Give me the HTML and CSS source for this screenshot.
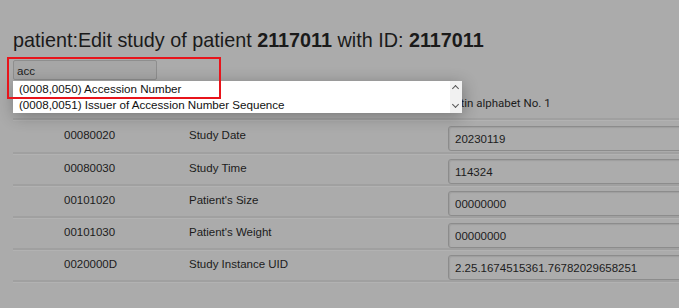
FILE: index.html
```html
<!DOCTYPE html>
<html>
<head>
<meta charset="utf-8">
<link rel="stylesheet" href="styles.css">
</head>
<body>
<div class="page">
  <h1 class="title">patient:Edit study of patient <b>2117011</b> with ID: <b>2117011</b></h1>
  <div class="search">
    <input class="search-input" type="text" value="acc">
    <div class="dropdown">
      <div class="options">
        <div class="option">(0008,0050) Accession Number</div>
        <div class="option">(0008,0051) Issuer of Accession Number Sequence</div>
      </div>
      <div class="scrollbar"><span class="arrow up"></span><span class="arrow down"></span></div>
    </div>
    <div class="highlight"></div>
  </div>
  <div class="table">
    <div class="row head-row">
      <div class="tag"></div>
      <div class="name"></div>
      <div class="value charset">Latin alphabet No. 1</div>
    </div>
    <div class="row first">
      <div class="tag">00080020</div>
      <div class="name">Study Date</div>
      <div class="value"><input class="field" type="text" value="20230119"></div>
    </div>
    <div class="row">
      <div class="tag">00080030</div>
      <div class="name">Study Time</div>
      <div class="value"><input class="field" type="text" value="114324"></div>
    </div>
    <div class="row">
      <div class="tag">00101020</div>
      <div class="name">Patient's Size</div>
      <div class="value"><input class="field" type="text" value="00000000"></div>
    </div>
    <div class="row">
      <div class="tag">00101030</div>
      <div class="name">Patient's Weight</div>
      <div class="value"><input class="field" type="text" value="00000000"></div>
    </div>
    <div class="row">
      <div class="tag">0020000D</div>
      <div class="name">Study Instance UID</div>
      <div class="value"><input class="field" type="text" value="2.25.1674515361.76782029658251"></div>
    </div>
  </div>
</div>
</body>
</html>
```
FILE: styles.css
```css
html, body {
  margin: 0;
  padding: 0;
}
body {
  width: 679px;
  height: 308px;
  overflow: hidden;
  background: #ababab;
  font-family: "Liberation Sans", Arial, sans-serif;
  color: #1c1c1c;
}
.page {
  padding-left: 13px;
}
.title {
  margin: 0;
  padding-top: 29px;
  font-size: 19.8px;
  font-weight: normal;
  line-height: 23px;
  color: #1a1a1a;
}
.title b {
  font-weight: bold;
}
.search {
  position: relative;
  margin-top: 8px;
  height: 20px;
}
.search-input {
  box-sizing: border-box;
  width: 144px;
  height: 20px;
  margin: 0;
  padding: 0 3px;
  border: 1px solid #8e8e8e;
  border-radius: 2px;
  background: #a6a6a6;
  font-family: "Liberation Sans", Arial, sans-serif;
  font-size: 11.6px;
  color: #1c1c1c;
  outline: none;
}
.dropdown {
  position: absolute;
  left: 0;
  top: 21px;
  width: 449px;
  height: 32px;
  background: #fff;
  display: flex;
  box-shadow: 1px 3px 16px rgba(0, 0, 0, 0.3);
  z-index: 5;
}
.options {
  flex: 1;
}
.option {
  height: 16px;
  line-height: 16px;
  padding-left: 6px;
  font-size: 11.6px;
  color: #111;
}
.scrollbar {
  width: 12px;
  background: #f1f1f1;
  position: relative;
}
.arrow {
  position: absolute;
  left: 3px;
  width: 4px;
  height: 4px;
  border-left: 1.2px solid #555;
  border-top: 1.2px solid #555;
}
.arrow.up {
  top: 5px;
  transform: rotate(45deg);
}
.arrow.down {
  bottom: 6px;
  transform: rotate(225deg);
}
.highlight {
  position: absolute;
  left: -6px;
  top: -3px;
  width: 210px;
  height: 38px;
  border: 2px solid #e8141b;
  z-index: 6;
}
.row {
  display: grid;
  grid-template-columns: 51px 125px 259px 1fr;
  height: 30px;
  border-bottom: 2px solid #a0a0a0;
  box-shadow: 0 1px 0 #b2b2b2;
  font-size: 11.5px;
}
.row::before {
  content: "";
}
.head-row {
  height: 38px;
}
.row.first {
  height: 32px;
}
.tag, .name {
  padding-top: 8px;
}
.value {
  padding-top: 5px;
}
.first .tag, .first .name {
  padding-top: 9px;
}
.first .value {
  padding-top: 6px;
}
.charset {
  padding-top: 16px;
  font-family: Roboto, "Liberation Sans", sans-serif;
  font-size: 11.5px;
  color: #1c1c1c;
}
.field {
  box-sizing: border-box;
  width: 260px;
  height: 25px;
  margin: 0;
  padding: 0 6px;
  border: 1px solid #8c8c8c;
  border-radius: 3px;
  background: #acacac;
  box-shadow: inset 1px 1px 1px rgba(0, 0, 0, 0.08);
  font-family: "Liberation Sans", Arial, sans-serif;
  font-size: 11.5px;
  color: #1c1c1c;
}
```
